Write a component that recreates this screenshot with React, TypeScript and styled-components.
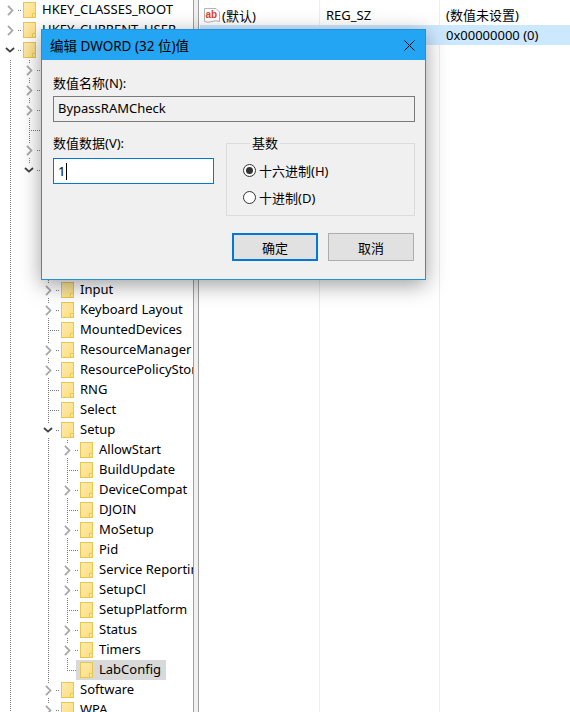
import styled, { createGlobalStyle } from 'styled-components';

const GlobalStyle = createGlobalStyle`
  html, body {
    margin: 0;
    padding: 0;
    background: #fff;
  }
  * {
    box-sizing: border-box;
  }
`;

const uiFont = `"Noto Sans", "Noto Sans CJK SC", sans-serif`;
const dots = '#7d7d7d';

const Page = styled.div`
  position: relative;
  display: flex;
  width: 570px;
  height: 712px;
  overflow: hidden;
  background: #fff;
  color: #000;
  font-family: ${uiFont};
  font-size: 13px;
`;

/* tree pane */

const TreePane = styled.div`
  flex: 0 0 193px;
  height: 100%;
  overflow: hidden;
`;

const Row = styled.div`
  display: flex;
  height: 20px;
  white-space: nowrap;
`;

const Guide = styled.span<{ $on: boolean }>`
  flex: 0 0 19px;
  height: 20px;
  background: ${({ $on }) =>
    $on
      ? `repeating-linear-gradient(to bottom, ${dots} 0 1px, transparent 1px 2px) 10px 0 / 1px 100% no-repeat`
      : 'none'};
`;

const Expander = styled.span<{ $line: 'none' | 'full' | 'end'; $leaf: boolean }>`
  position: relative;
  flex: 0 0 19px;
  height: 20px;
  display: flex;
  align-items: center;
  justify-content: center;

  &::before {
    content: '';
    position: absolute;
    left: 10px;
    top: 0;
    width: 1px;
    height: ${({ $line }) => ($line === 'none' ? '0' : $line === 'end' ? '10px' : '20px')};
    background: repeating-linear-gradient(to bottom, ${dots} 0 1px, transparent 1px 2px);
  }

  &::after {
    content: '';
    position: absolute;
    left: ${({ $leaf }) => ($leaf ? '10px' : '18px')};
    top: 10px;
    width: ${({ $leaf }) => ($leaf ? '12px' : '4px')};
    height: 1px;
    background: repeating-linear-gradient(to right, ${dots} 0 1px, transparent 1px 2px);
  }
`;

const ChevronBox = styled.span`
  position: relative;
  z-index: 1;
  display: flex;
  align-items: center;
  justify-content: center;
  width: 11px;
  height: 14px;
  margin-left: 1px;
  background: #fff;
`;

const Node = styled.span<{ $selected?: boolean }>`
  position: relative;
  z-index: 1;
  display: flex;
  align-items: center;
  height: 20px;
  padding: 0 5px 0 4px;
  background: ${({ $selected }) => ($selected ? '#d9d9d9' : 'transparent')};
`;

const NodeLabel = styled.span`
  margin-left: 6px;
  line-height: 18px;
  margin-top: -2px;
`;

function Chevron({ open }: { open?: boolean }) {
  return open ? (
    <svg width="10" height="6" viewBox="0 0 10 6">
      <path d="M1 1 L5 4.6 L9 1" fill="none" stroke="#404040" strokeWidth="1.8" />
    </svg>
  ) : (
    <svg width="7" height="11" viewBox="0 0 7 11">
      <path d="M1 .8 L5.4 5.5 L1 10.2" fill="none" stroke="#a6a6a6" strokeWidth="1.8" />
    </svg>
  );
}

function Folder() {
  return (
    <svg width="13" height="16" viewBox="0 0 13 16">
      <defs>
        <linearGradient id="folderFill" x1="0" y1="0" x2="1" y2="1">
          <stop offset="0" stopColor="#fcebb0" />
          <stop offset="1" stopColor="#fedd7c" />
        </linearGradient>
      </defs>
      <rect x=".5" y=".5" width="12" height="15" fill="url(#folderFill)" stroke="#e9c650" />
      <path d="M9.5 15.5 V11.5 H12.5" fill="#fdeeb8" stroke="#e9c650" />
    </svg>
  );
}

type TreeItem = {
  label: string;
  guides: boolean[];
  kind: 'closed' | 'open' | 'leaf';
  line?: 'none' | 'full' | 'end';
  selected?: boolean;
};

const sys = [true, false];
const setup = [true, false, true];

const treeItems: TreeItem[] = [
  { label: 'HKEY_CLASSES_ROOT', guides: [], kind: 'closed', line: 'none' },
  { label: 'HKEY_CURRENT_USER', guides: [], kind: 'closed', line: 'none' },
  { label: 'HKEY_LOCAL_MACHINE', guides: [], kind: 'open', line: 'none' },
  { label: 'BCD00000000', guides: [true], kind: 'closed' },
  { label: 'HARDWARE', guides: [true], kind: 'closed' },
  { label: 'SAM', guides: [true], kind: 'closed' },
  { label: 'SECURITY', guides: [true], kind: 'leaf' },
  { label: 'SOFTWARE', guides: [true], kind: 'closed' },
  { label: 'SYSTEM', guides: [true], kind: 'open', line: 'end' },
  { label: 'ActivationBroker', guides: sys, kind: 'closed' },
  { label: 'ControlSet001', guides: sys, kind: 'closed' },
  { label: 'CurrentControlSet', guides: sys, kind: 'closed' },
  { label: 'DriverDatabase', guides: sys, kind: 'closed' },
  { label: 'HardwareConfig', guides: sys, kind: 'closed' },
  { label: 'Input', guides: sys, kind: 'closed' },
  { label: 'Keyboard Layout', guides: sys, kind: 'closed' },
  { label: 'MountedDevices', guides: sys, kind: 'leaf' },
  { label: 'ResourceManager', guides: sys, kind: 'closed' },
  { label: 'ResourcePolicyStore', guides: sys, kind: 'closed' },
  { label: 'RNG', guides: sys, kind: 'leaf' },
  { label: 'Select', guides: sys, kind: 'leaf' },
  { label: 'Setup', guides: sys, kind: 'open' },
  { label: 'AllowStart', guides: setup, kind: 'closed' },
  { label: 'BuildUpdate', guides: setup, kind: 'leaf' },
  { label: 'DeviceCompat', guides: setup, kind: 'closed' },
  { label: 'DJOIN', guides: setup, kind: 'leaf' },
  { label: 'MoSetup', guides: setup, kind: 'closed' },
  { label: 'Pid', guides: setup, kind: 'leaf' },
  { label: 'Service Reporting API', guides: setup, kind: 'closed' },
  { label: 'SetupCl', guides: setup, kind: 'closed' },
  { label: 'SetupPlatform', guides: setup, kind: 'leaf' },
  { label: 'Status', guides: setup, kind: 'closed' },
  { label: 'Timers', guides: setup, kind: 'closed' },
  { label: 'LabConfig', guides: setup, kind: 'leaf', line: 'end', selected: true },
  { label: 'Software', guides: sys, kind: 'closed' },
  { label: 'WPA', guides: sys, kind: 'closed' },
];

const Splitter = styled.div`
  flex: 0 0 6px;
  height: 100%;
  background: #f0f0f0;
  border-left: 1px solid #a0a0a0;
  border-right: 1px solid #a0a0a0;
`;

/* value list */

const ListPane = styled.div`
  flex: 1;
  height: 100%;
  padding: 5px 0 0 1px;
  background:
    linear-gradient(#e6eff9, #e6eff9) 120px 0 / 1px 100% no-repeat,
    linear-gradient(#e6eff9, #e6eff9) 240px 0 / 1px 100% no-repeat;
`;

const ValueRow = styled.div<{ $selected?: boolean }>`
  display: grid;
  grid-template-columns: 120px 120px 1fr;
  align-items: center;
  height: 20px;
  background: ${({ $selected }) => ($selected ? '#cce8ff' : 'transparent')};
`;

const NameCell = styled.div`
  display: flex;
  align-items: center;
  gap: 2px;
  padding-left: 4px;
  overflow: hidden;
  white-space: nowrap;
`;

const TextCell = styled.div`
  padding-left: 6px;
  line-height: 18px;
  margin-top: -1px;
  white-space: nowrap;
`;

function StringIcon() {
  return (
    <svg width="16" height="16" viewBox="0 0 16 16">
      <path d="M.5 1.5 H12 L15.5 5 V14.5 Q12 13 8 14.5 T.5 14.5 Z" fill="#fff" stroke="#b4b4b4" />
      <text x="1.5" y="11" fontFamily="Liberation Sans" fontWeight="700" fontSize="10" fill="#d8452b">
        ab
      </text>
    </svg>
  );
}

function BinaryIcon() {
  return (
    <svg width="16" height="16" viewBox="0 0 16 16">
      <path d="M.5 1.5 H12 L15.5 5 V14.5 H.5 Z" fill="#fff" stroke="#b4b4b4" />
      <path d="M3 5 H13 M3 9 H13" stroke="#2a6fc9" strokeWidth="2" strokeDasharray="2 1" />
    </svg>
  );
}

/* dialog */

const Dialog = styled.div`
  position: absolute;
  left: 41px;
  top: 29px;
  z-index: 5;
  display: flex;
  flex-direction: column;
  width: 385px;
  height: 251px;
  background: #f0f0f0;
  border: 1px solid #1b92e6;
  box-shadow: 0 5px 20px rgba(0, 0, 0, 0.38);
`;

const TitleBar = styled.div`
  flex: 0 0 30px;
  display: flex;
  align-items: center;
  justify-content: space-between;
  padding: 0 10px 0 8px;
  background: #24a5f4;
  font-size: 13.5px;
`;

const DialogBody = styled.div`
  display: flex;
  flex-direction: column;
  padding: 15px 10px 0 11px;
`;

const FieldLabel = styled.div`
  height: 16px;
  line-height: 16px;
`;

const NameField = styled.div`
  height: 26px;
  margin-top: 5px;
  padding-left: 4px;
  border: 1px solid #7a7a7a;
  background: #f0f0f0;
  line-height: 22px;
`;

const DataRow = styled.div`
  display: grid;
  grid-template-columns: 161px 189px;
  column-gap: 12px;
  margin-top: 13px;
`;

const DataField = styled.div`
  display: flex;
  align-items: center;
  height: 26px;
  margin-top: 7px;
  padding-left: 4px;
  border: 1px solid #0078d7;
  background: #fff;
  line-height: 22px;
`;

const Caret = styled.span`
  width: 1px;
  height: 17px;
  margin-left: 1px;
  background: #000;
`;

const BaseGroup = styled.fieldset`
  display: flex;
  flex-direction: column;
  gap: 7px;
  height: 81px;
  margin: 0;
  padding: 9px 0 0 16px;
  border: 1px solid #dcdcdc;
`;

const BaseLegend = styled.legend`
  height: 16px;
  margin-left: 7px;
  padding: 0 2px;
  line-height: 16px;
`;

const RadioRow = styled.label`
  display: flex;
  align-items: center;
  gap: 3px;
  height: 20px;
`;

const RadioMark = styled.span<{ $checked?: boolean }>`
  display: flex;
  align-items: center;
  justify-content: center;
  width: 13px;
  height: 13px;
  border: 1px solid #333;
  border-radius: 50%;
  background: #fff;

  &::after {
    content: '';
    display: ${({ $checked }) => ($checked ? 'block' : 'none')};
    width: 7px;
    height: 7px;
    border-radius: 50%;
    background: #333;
  }
`;

const Footer = styled.div`
  display: flex;
  justify-content: flex-end;
  gap: 10px;
  margin: 17px 1px 0 0;
`;

const DialogButton = styled.div<{ $primary?: boolean }>`
  display: flex;
  align-items: center;
  justify-content: center;
  width: 86px;
  height: 28px;
  background: #e1e1e1;
  border: ${({ $primary }) => ($primary ? '2px solid #0078d7' : '1px solid #adadad')};
`;

export default function App() {
  return (
    <Page>
      <GlobalStyle />
      <TreePane>
        {treeItems.map((item) => (
          <Row key={item.label}>
            {item.guides.map((on, i) => (
              <Guide key={i} $on={on} />
            ))}
            <Expander $line={item.line ?? 'full'} $leaf={item.kind === 'leaf'}>
              {item.kind !== 'leaf' && (
                <ChevronBox>
                  <Chevron open={item.kind === 'open'} />
                </ChevronBox>
              )}
            </Expander>
            <Node $selected={item.selected}>
              <Folder />
              <NodeLabel>{item.label}</NodeLabel>
            </Node>
          </Row>
        ))}
      </TreePane>
      <Splitter />
      <ListPane>
        <ValueRow>
          <NameCell>
            <StringIcon />
            (默认)
          </NameCell>
          <TextCell>REG_SZ</TextCell>
          <TextCell>(数值未设置)</TextCell>
        </ValueRow>
        <ValueRow $selected>
          <NameCell>
            <BinaryIcon />
            BypassRAMCheck
          </NameCell>
          <TextCell>REG_DWORD</TextCell>
          <TextCell>0x00000000 (0)</TextCell>
        </ValueRow>
      </ListPane>

      <Dialog>
        <TitleBar>
          编辑 DWORD (32 位)值
          <svg width="11" height="11" viewBox="0 0 11 11">
            <path d="M.5 .5 L10.5 10.5 M10.5 .5 L.5 10.5" stroke="#000" strokeWidth="1" />
          </svg>
        </TitleBar>
        <DialogBody>
          <FieldLabel>数值名称(N):</FieldLabel>
          <NameField>BypassRAMCheck</NameField>
          <DataRow>
            <div>
              <FieldLabel>数值数据(V):</FieldLabel>
              <DataField>
                1
                <Caret />
              </DataField>
            </div>
            <BaseGroup>
              <BaseLegend>基数</BaseLegend>
              <RadioRow>
                <RadioMark $checked />
                十六进制(H)
              </RadioRow>
              <RadioRow>
                <RadioMark />
                十进制(D)
              </RadioRow>
            </BaseGroup>
          </DataRow>
          <Footer>
            <DialogButton $primary>确定</DialogButton>
            <DialogButton>取消</DialogButton>
          </Footer>
        </DialogBody>
      </Dialog>
    </Page>
  );
}
